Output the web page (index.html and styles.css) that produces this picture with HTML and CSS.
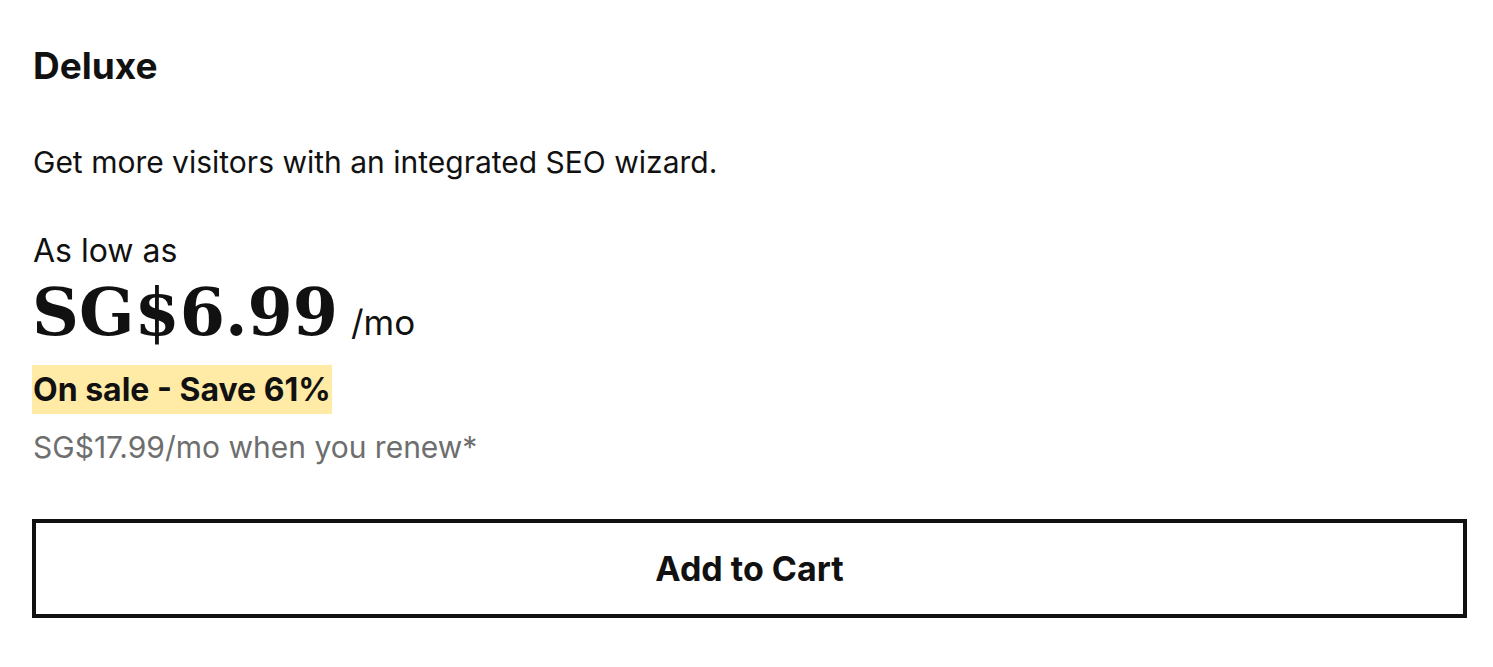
FILE: index.html
```html
<!DOCTYPE html>
<html lang="en">
<head>
  <meta charset="UTF-8">
  <title>Deluxe</title>
  <link rel="stylesheet" href="styles.css">
</head>
<body>

<div class="plan-card">
  <h2 class="plan-title">Deluxe</h2>
  <p class="plan-desc">Get more visitors with an integrated SEO wizard.</p>

  <div class="price-block">
    <div class="price-label">As low as</div>
    <div class="price-row">
      <span class="price">SG$6.99</span>
      <span class="price-term">/mo</span>
    </div>
    <div class="sale-tag">On sale - Save 61%</div>
    <div class="renew">SG$17.99/mo when you renew*</div>
  </div>

  <button class="cart-btn">Add to Cart</button>
</div>

</body>
</html>
```

FILE: styles.css
```css
* {
  box-sizing: border-box;
}

body {
  margin: 0;
  background: #fff;
  color: #111;
  font-family: 'Inter', 'Noto Sans', sans-serif;
}

.plan-card {
  padding: 42px 26px 40px 32px;
}

.plan-title {
  margin: 0;
  font-size: 37px;
  font-weight: 700;
  line-height: 48px;
  padding-left: 1px;
}

.plan-desc {
  margin: 52px 0 0;
  font-size: 30px;
  line-height: 40px;
  padding-left: 1px;
}

.price-block {
  margin-top: 49px;
}

.price-label {
  font-size: 32px;
  line-height: 40px;
  padding-left: 1px;
}

.price-row {
  display: flex;
  align-items: baseline;
  gap: 13px;
  margin-top: 1px;
}

.price {
  font-family: 'DejaVu Serif', serif;
  font-weight: 700;
  font-size: 65px;
  line-height: 80px;
}

.price-term {
  font-size: 35px;
}

.sale-tag {
  display: inline-block;
  margin-top: 13px;
  background: #ffeaa6;
  font-size: 32px;
  font-weight: 700;
  line-height: 49px;
  padding: 0 1px;
}

.renew {
  margin-top: 13px;
  color: #6e6e6e;
  font-size: 30px;
  line-height: 40px;
  padding-left: 1px;
}

.cart-btn {
  display: block;
  width: 100%;
  height: 99px;
  margin-top: 52px;
  background: #fff;
  border: 4px solid #111;
  border-radius: 0;
  color: #111;
  font-family: inherit;
  font-size: 34px;
  font-weight: 700;
  cursor: pointer;
}
```
